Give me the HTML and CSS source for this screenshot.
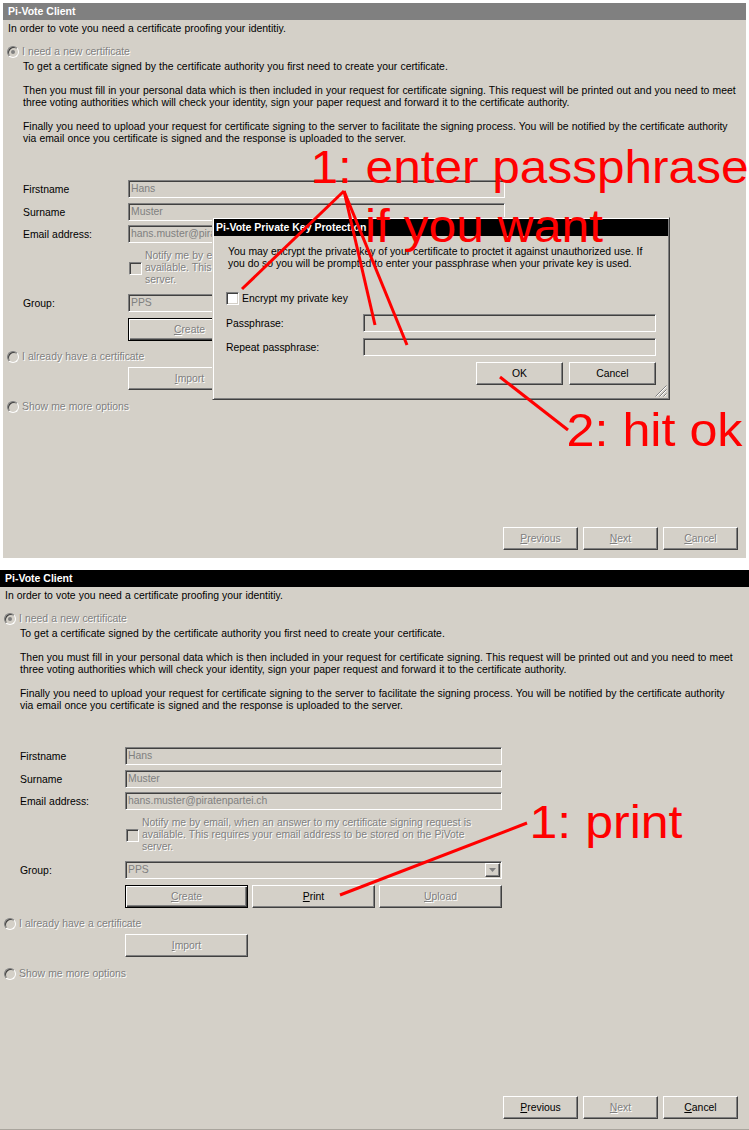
FILE: index.html
```html
<!DOCTYPE html>
<html lang="en">
<head>
<meta charset="utf-8">
<title>Pi-Vote Client</title>
<link rel="stylesheet" href="styles.css">
</head>
<body>
<div class="page">

  <section class="win win--first">
    <div class="titlebar titlebar--inactive">Pi-Vote Client</div>
    <p class="intro">In order to vote you need a certificate proofing your identitiy.</p>
    <div class="opt opt--1"><span class="radio radio--on"></span><span class="opt-label dis">I need a new certificate</span></div>
    <div class="desc">
      <p>To get a certificate signed by the certificate authority you first need to create your certificate.</p>
      <p>Then you must fill in your personal data which is then included in your request for certificate signing. This request will be printed out and you need to meet<br>three voting authorities which will check your identity, sign your paper request and forward it to the certificate authority.</p>
      <p>Finally you need to upload your request for certificate signing to the server to facilitate the signing process. You will be notified by the certificate authority<br>via email once you certificate is signed and the response is uploaded to the server.</p>
    </div>
    <div class="form">
      <div class="row"><span class="lbl">Firstname</span><span class="field">Hans</span></div>
      <div class="row row--2"><span class="lbl">Surname</span><span class="field">Muster</span></div>
      <div class="row row--3"><span class="lbl">Email address:</span><span class="field">hans.muster@piratenpartei.ch</span></div>
      <div class="notify"><span class="check"></span><span class="notify-text dis">Notify me by email, when an answer to my certificate signing request is<br>available. This requires your email address to be stored on the PiVote<br>server.</span></div>
      <div class="row row--group"><span class="lbl">Group:</span><span class="field field--select">PPS<span class="drop"><svg width="7" height="4" viewBox="0 0 7 4"><polygon points="0,0 7,0 3.5,4" fill="#808080"/></svg></span></span></div>
      <div class="actions">
        <span class="btn btn--default dis"><u>C</u>reate</span>
        <span class="btn dis"><u>P</u>rint</span>
        <span class="btn dis"><u>U</u>pload</span>
      </div>
    </div>
    <div class="opt opt--2"><span class="radio"></span><span class="opt-label dis">I already have a certificate</span></div>
    <div class="import"><span class="btn dis"><u>I</u>mport</span></div>
    <div class="opt opt--3"><span class="radio"></span><span class="opt-label dis">Show me more options</span></div>
    <div class="footer">
      <span class="btn dis"><u>P</u>revious</span>
      <span class="btn dis"><u>N</u>ext</span>
      <span class="btn dis"><u>C</u>ancel</span>
    </div>

    <div class="dialog">
      <div class="titlebar titlebar--dialog">Pi-Vote Private Key Protection</div>
      <div class="dlg-body">
        <p class="dlg-text">You may encrypt the private key of your certificate to proctet it against unauthorized use. If<br>you do so you will be prompted to enter your passphrase when your private key is used.</p>
        <div class="dlg-check"><span class="check check--white"></span><span class="notify-text">Encrypt my private key</span></div>
        <div class="dlg-row dlg-row--1"><span class="dlg-lbl">Passphrase:</span><span class="field field--dlg"></span></div>
        <div class="dlg-row dlg-row--2"><span class="dlg-lbl">Repeat passphrase:</span><span class="field field--dlg"></span></div>
        <div class="dlg-buttons">
          <span class="btn">OK</span>
          <span class="btn">Cancel</span>
        </div>
      </div>
      <svg class="grip" width="12" height="12" viewBox="0 0 12 12">
        <path d="M11.5 0.5 L0.5 11.5 M11.5 4.5 L4.5 11.5 M11.5 8.5 L8.5 11.5" stroke="#808080" stroke-width="1"/>
        <path d="M11.5 1.5 L1.5 11.5 M11.5 5.5 L5.5 11.5 M11.5 9.5 L9.5 11.5" stroke="#ffffff" stroke-width="1"/>
      </svg>
    </div>
  </section>

  <section class="win win--second">
    <div class="titlebar">Pi-Vote Client</div>
    <p class="intro">In order to vote you need a certificate proofing your identitiy.</p>
    <div class="opt opt--1"><span class="radio radio--on"></span><span class="opt-label dis">I need a new certificate</span></div>
    <div class="desc">
      <p>To get a certificate signed by the certificate authority you first need to create your certificate.</p>
      <p>Then you must fill in your personal data which is then included in your request for certificate signing. This request will be printed out and you need to meet<br>three voting authorities which will check your identity, sign your paper request and forward it to the certificate authority.</p>
      <p>Finally you need to upload your request for certificate signing to the server to facilitate the signing process. You will be notified by the certificate authority<br>via email once you certificate is signed and the response is uploaded to the server.</p>
    </div>
    <div class="form">
      <div class="row"><span class="lbl">Firstname</span><span class="field">Hans</span></div>
      <div class="row row--2"><span class="lbl">Surname</span><span class="field">Muster</span></div>
      <div class="row row--3"><span class="lbl">Email address:</span><span class="field">hans.muster@piratenpartei.ch</span></div>
      <div class="notify"><span class="check"></span><span class="notify-text dis">Notify me by email, when an answer to my certificate signing request is<br>available. This requires your email address to be stored on the PiVote<br>server.</span></div>
      <div class="row row--group"><span class="lbl">Group:</span><span class="field field--select">PPS<span class="drop"><svg width="7" height="4" viewBox="0 0 7 4"><polygon points="0,0 7,0 3.5,4" fill="#808080"/></svg></span></span></div>
      <div class="actions">
        <span class="btn btn--default dis"><u>C</u>reate</span>
        <span class="btn"><u>P</u>rint</span>
        <span class="btn dis"><u>U</u>pload</span>
      </div>
    </div>
    <div class="opt opt--2"><span class="radio"></span><span class="opt-label dis">I already have a certificate</span></div>
    <div class="import"><span class="btn dis"><u>I</u>mport</span></div>
    <div class="opt opt--3"><span class="radio"></span><span class="opt-label dis">Show me more options</span></div>
    <div class="footer">
      <span class="btn"><u>P</u>revious</span>
      <span class="btn dis"><u>N</u>ext</span>
      <span class="btn"><u>C</u>ancel</span>
    </div>
  </section>

  <svg class="annot" width="749" height="1130" viewBox="0 0 749 1130">
    <g stroke="#ff0000" stroke-width="3" fill="none">
      <line x1="344" y1="191" x2="242" y2="289"/>
      <line x1="344" y1="191" x2="375" y2="325"/>
      <line x1="344" y1="191" x2="407" y2="345"/>
      <line x1="500" y1="377" x2="568" y2="430"/>
      <line x1="340" y1="895" x2="527" y2="823"/>
    </g>
    <g class="annot-text" fill="#ff0000">
      <text x="310.5" y="183" textLength="438" lengthAdjust="spacingAndGlyphs">1: enter passphrase</text>
      <text x="365" y="242" textLength="238" lengthAdjust="spacingAndGlyphs">if you want</text>
      <text x="566.5" y="446" textLength="176" lengthAdjust="spacingAndGlyphs">2: hit ok</text>
      <text x="529.5" y="838" textLength="153" lengthAdjust="spacingAndGlyphs">1: print</text>
    </g>
  </svg>
</div>
</body>
</html>
```

FILE: styles.css
```css
* { box-sizing: border-box; }

body {
  margin: 0;
  background: #ffffff;
  font-family: "Liberation Sans", Arial, sans-serif;
  font-size: 10.4px;
  word-spacing: 0.25px;
  color: #000000;
}

.page {
  position: relative;
  width: 749px;
  height: 1130px;
  overflow: hidden;
}

/* ---------- window panels ---------- */
.win {
  position: relative;
  background: #d4d0c8;
  display: flex;
  flex-direction: column;
}
.win--first {
  margin: 3px 3px 0;
  height: 555px;
  padding-bottom: 8px;
}
.win--second {
  margin-top: 12px;
  height: 560px;
  padding-bottom: 10px;
  border-bottom: 1px solid #a9a59d;
}

.titlebar {
  flex: none;
  height: 17px;
  line-height: 17px;
  padding-left: 5px;
  background: #000000;
  color: #ffffff;
  font-weight: bold;
  font-size: 10.5px;
  word-spacing: 0;
  white-space: nowrap;
}
.titlebar--inactive { background: #808080; }
.titlebar--dialog { padding-left: 2px; }

.intro {
  margin: 3px 0 0 5px;
  line-height: 12px;
  white-space: nowrap;
}

.dis {
  color: #808080;
  text-shadow: 1px 1px 0 #ffffff;
}

/* ---------- radio options ---------- */
.opt {
  display: flex;
  align-items: center;
  height: 13px;
  margin-left: 4px;
  white-space: nowrap;
}
.opt--1 { margin-top: 10px; }
.opt--2 { margin-top: 9px; }
.opt--3 { margin-top: 10px; }
.opt-label { margin-left: 3px; }

.radio {
  position: relative;
  flex: none;
  width: 12px;
  height: 12px;
  border-radius: 50%;
  border: 1px solid;
  border-color: #808080 #ffffff #ffffff #808080;
  background: #d4d0c8;
  box-shadow: inset 1px 1px 0 #404040, inset -1px -1px 0 #d4d0c8;
}
.radio--on::after {
  content: "";
  position: absolute;
  left: 3px;
  top: 3px;
  width: 4px;
  height: 4px;
  border-radius: 50%;
  background: #808080;
}

.desc {
  margin: 3px 0 0 20px;
  line-height: 12px;
  white-space: nowrap;
}
.desc p { margin: 0 0 12px; }
.desc p:last-child { margin-bottom: 0; }

/* ---------- form ---------- */
.form {
  margin: 35px 0 0 20px;
  display: flex;
  flex-direction: column;
}
.row {
  display: flex;
  align-items: center;
  height: 18px;
}
.row--2 { margin-top: 5px; }
.row--3 { margin-top: 4px; }
.row--group { margin-top: 8px; }
.lbl {
  flex: none;
  width: 105px;
  white-space: nowrap;
}

.field {
  position: relative;
  flex: none;
  display: block;
  width: 377px;
  height: 18px;
  padding-left: 2px;
  line-height: 16px;
  color: #808080;
  background: #d4d0c8;
  border: 1px solid;
  border-color: #808080 #ffffff #ffffff #808080;
  box-shadow: inset 1px 1px 0 #404040, inset -1px -1px 0 #d4d0c8;
  white-space: nowrap;
  overflow: hidden;
}
.drop {
  position: absolute;
  top: 1px;
  right: 1px;
  width: 15px;
  height: 14px;
  display: flex;
  align-items: center;
  justify-content: center;
  background: #d4d0c8;
  border: 1px solid;
  border-color: #ffffff #404040 #404040 #ffffff;
  box-shadow: inset -1px -1px 0 #808080;
}

.check {
  flex: none;
  width: 13px;
  height: 13px;
  background: #d4d0c8;
  border: 1px solid;
  border-color: #808080 #ffffff #ffffff #808080;
  box-shadow: inset 1px 1px 0 #404040, inset -1px -1px 0 #d4d0c8;
}
.check--white { background: #ffffff; }

.notify {
  display: flex;
  align-items: center;
  margin: 7px 0 0 106px;
}
.notify-text {
  margin-left: 3px;
  line-height: 12px;
  white-space: nowrap;
}

/* ---------- buttons ---------- */
.btn {
  flex: none;
  display: flex;
  align-items: center;
  justify-content: center;
  width: 123px;
  height: 23px;
  background: #d4d0c8;
  border: 1px solid;
  border-color: #ffffff #404040 #404040 #ffffff;
  box-shadow: inset -1px -1px 0 #808080;
  white-space: nowrap;
}
.btn--default {
  border-color: #000000;
  box-shadow: inset 1px 1px 0 #ffffff, inset -1px -1px 0 #404040, inset -2px -2px 0 #808080;
}

.actions {
  display: flex;
  gap: 4px;
  margin: 6px 0 0 105px;
}
.import {
  display: flex;
  margin: 4px 0 0 125px;
}

.footer {
  margin-top: auto;
  display: flex;
  justify-content: flex-end;
  gap: 5px;
}
.win--first .footer { padding-right: 8px; }
.win--second .footer { padding-right: 11px; }
.footer .btn { width: 75px; }

/* ---------- dialog ---------- */
.dialog {
  position: absolute;
  left: 209px;
  top: 214px;
  width: 458px;
  height: 183px;
  padding: 1px;
  background: #d4d0c8;
  border: 1px solid;
  border-color: #d4d0c8 #404040 #404040 #d4d0c8;
  box-shadow: inset 1px 1px 0 #ffffff, inset -1px -1px 0 #808080;
}
.dlg-body {
  padding: 10px 12px 0 14px;
}
.dlg-text {
  margin: 0;
  line-height: 12px;
  white-space: nowrap;
  word-spacing: 0;
}
.dlg-check {
  display: flex;
  align-items: center;
  height: 13px;
  margin: 22px 0 0 -2px;
}
.dlg-row {
  display: flex;
  align-items: center;
  height: 18px;
  margin-left: -2px;
}
.dlg-row--1 { margin-top: 9px; }
.dlg-row--2 { margin-top: 6px; }
.dlg-lbl {
  flex: none;
  width: 137px;
  white-space: nowrap;
}
.field--dlg { width: 293px; }
.dlg-buttons {
  display: flex;
  justify-content: flex-end;
  gap: 6px;
  margin-top: 6px;
}
.dlg-buttons .btn { width: 87px; }
.grip {
  position: absolute;
  right: 2px;
  bottom: 2px;
}

/* ---------- annotations ---------- */
.annot {
  position: absolute;
  left: 0;
  top: 0;
  pointer-events: none;
}
.annot-text {
  font-family: "Liberation Sans", Arial, sans-serif;
  font-size: 46px;
  word-spacing: 0;
}
```
